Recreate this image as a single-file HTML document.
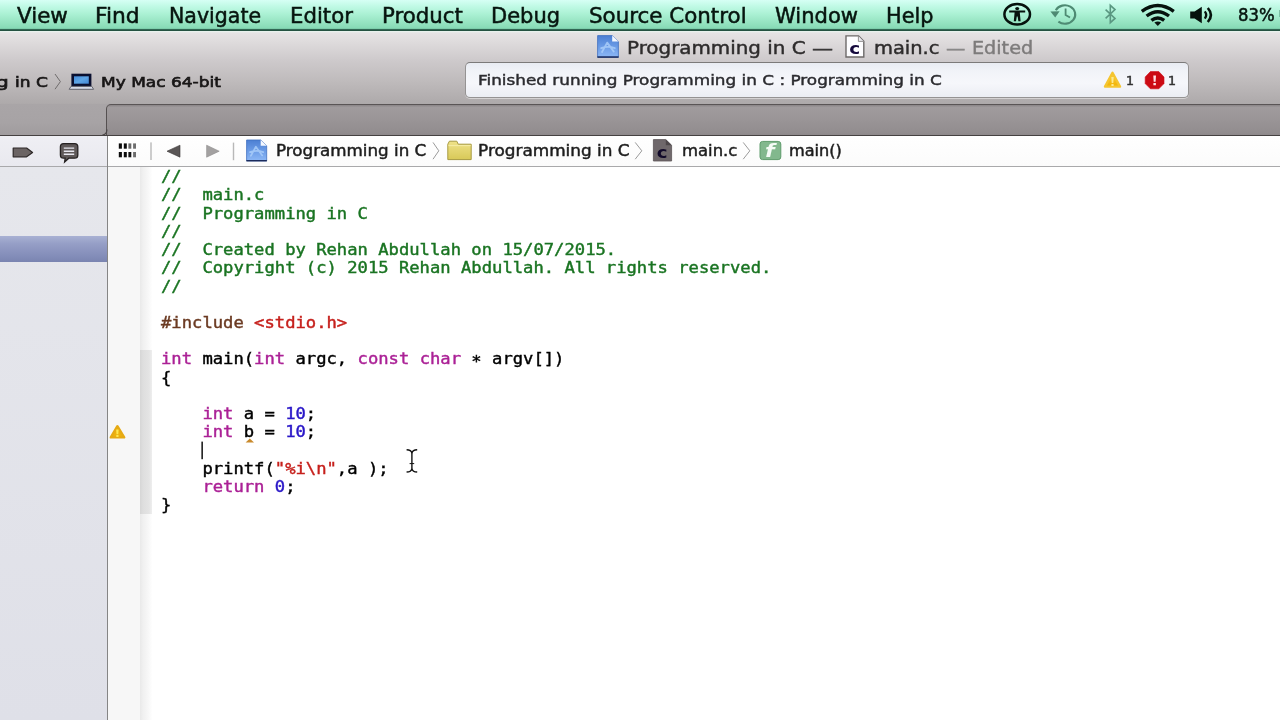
<!DOCTYPE html>
<html lang="en">
<head>
<meta charset="utf-8">
<title>Programming in C — main.c — Edited</title>
<style>
html,body{margin:0;padding:0;}
body{width:1280px;height:720px;overflow:hidden;position:relative;background:#fff;font-family:"DejaVu Sans","Liberation Sans",sans-serif;}
.abs{position:absolute;}
.t{position:absolute;white-space:pre;transform-origin:0 50%;font-family:"DejaVu Sans","Liberation Sans",sans-serif;}
#menubar{left:0;top:0;width:1280px;height:31px;background:linear-gradient(#d6fff5 0px,#c1fae6 6px,#abf1d4 14px,#97e4c2 22px,#86dab5 28.4px,#3f7a64 29.2px,#1c4838 30px,#2c5c4a 31px);}
#menuline{left:0;top:29px;width:1280px;height:2px;background:linear-gradient(#3f7f68,#2c5a49);}
#toolbar{left:0;top:31px;width:1280px;height:73px;background:linear-gradient(#e9f6f0 0px,#e5e3e4 2px,#dfdcdd 10px,#cdc9cb 30px,#bfbbbc 50px,#b4b0b1 64px,#ada9aa 73px);}
#tabstrip{left:0;top:104px;width:1280px;height:31px;background:linear-gradient(#a9a5a7,#a7a3a5 60%,#a09c9e);}
#tab{left:106.4px;top:103.8px;width:1180px;height:32px;background:linear-gradient(#8a8587 0px,#a09b9d 2.5px,#9a9597 14px,#928d8f 27px,#8c8789 31px);border-top-left-radius:5px;border-top:1.2px solid #5a5556;border-left:1.2px solid #555051;}
#darkline{left:0;top:134.6px;width:1280px;height:1.4px;background:#454141;}
#navsel{left:0;top:136px;width:107px;height:30px;background:linear-gradient(#efeff4,#e9e9ef);}
#jump{left:108px;top:136px;width:1172px;height:30px;background:linear-gradient(#ffffff,#fbfbfb);}
#jumpline{left:0;top:166px;width:1280px;height:1px;background:#a9a9ab;}
#nav{left:0;top:167px;width:107px;height:553px;background:linear-gradient(#e6e7ec,#dfe0e8);}
#navrow{left:0;top:236px;width:107px;height:26px;background:linear-gradient(#a9b1d3 0px,#959ec6 8px,#838db9 20px,#7a84b0 26px);}
#divider{left:106.8px;top:136px;width:1.5px;height:584px;background:#858585;}
#gutter{left:108.4px;top:167px;width:32px;height:553px;background:#f7f7f7;}
#ribbon{left:140px;top:167px;width:12px;height:553px;background:linear-gradient(90deg,#e9e9e9 0,#f0f0f0 3px,#f7f7f7 8px,#fefefe 12px);}
#ribbonfn{left:140px;top:350px;width:12px;height:164px;background:linear-gradient(90deg,#d6d6d6 0,#dedede 3px,#e4e4e4 9px,#eeeeee 12px);}
#activity{left:465px;top:62.3px;width:722px;height:33.4px;border:1px solid #959393;border-top-color:#7c7a7a;border-radius:5px;background:linear-gradient(#e9ecf3 0px,#f1f3f8 8px,#f6f7fb 20px,#eceef4 33px);box-shadow:0 1px 0 rgba(255,255,255,.45);}
#code{left:161.2px;top:168.2px;-webkit-text-stroke:0.4px;margin:0;font-family:"DejaVu Sans Mono","Liberation Mono",monospace;font-size:15px;line-height:18.22px;color:#000;transform-origin:0 0;transform:scaleX(1.1455);white-space:pre;}
.c{color:#1a7422}.p{color:#6b3a22}.s{color:#c6201c}.k{color:#ab2196}.n{color:#2a17c8}
svg{position:absolute;overflow:visible}
.t,#code,#icons{filter:blur(0.4px);}
</style>
</head>
<body>
<div class="abs" id="menubar"></div>
<div class="abs" id="toolbar"></div>
<div class="abs" id="tabstrip"></div>
<div class="abs" id="tab"></div>
<div class="abs" id="darkline"></div>
<div class="abs" id="navsel"></div>
<div class="abs" id="jump"></div>
<div class="abs" id="nav"></div>
<div class="abs" id="navrow"></div>
<div class="abs" id="gutter"></div>
<div class="abs" id="ribbon"></div>
<div class="abs" id="ribbonfn"></div>
<div class="abs" id="jumpline"></div>
<div class="abs" id="divider"></div>
<div class="abs" id="activity"></div>
<svg id="icons" width="1280" height="720" viewBox="0 0 1280 720" style="left:0;top:0">
<defs>
<linearGradient id="gproj" x1="0" y1="0" x2="0" y2="1"><stop offset="0" stop-color="#4c7fd3"/><stop offset="0.5" stop-color="#6a9be6"/><stop offset="1" stop-color="#8db8f6"/></linearGradient>
<linearGradient id="gfold" x1="0" y1="0" x2="0" y2="1"><stop offset="0" stop-color="#efe289"/><stop offset="1" stop-color="#d8c958"/></linearGradient>
<linearGradient id="gwarn" x1="0" y1="0" x2="0" y2="1"><stop offset="0" stop-color="#f8cf45"/><stop offset="1" stop-color="#f2b200"/></linearGradient>
<linearGradient id="gscr" x1="0" y1="0" x2="1" y2="1"><stop offset="0" stop-color="#3f86d6"/><stop offset="0.5" stop-color="#5fa6e6"/><stop offset="1" stop-color="#3b7fd0"/></linearGradient>
<g id="proj">
 <path d="M0.6 0.6 H15.2 L21.4 6.6 V22.2 H0.6 Z" fill="url(#gproj)" stroke="#3f6fbf" stroke-width="0.8"/>
 <path d="M0.4 21.3 H21.6 V22.8 H0.4 Z" fill="#1b2b5c"/>
 <path d="M15.2 0.6 L21.4 6.6 H15.2 Z" fill="#f4f8ff"/>
 <path d="M5 17 L10.2 7.6 L16.8 16.6 M4.2 13.2 Q11 10.4 17.8 13.2" fill="none" stroke="#add0fa" stroke-opacity="0.8" stroke-width="1.8" stroke-linecap="round" stroke-linejoin="round"/>
</g>
</defs>

<!-- menu extras -->
<g id="acc">
 <ellipse cx="1017.2" cy="14.2" rx="12.8" ry="10.3" fill="none" stroke="#06120d" stroke-width="2.5"/>
 <ellipse cx="1017.2" cy="8.6" rx="2" ry="1.7" fill="#06120d"/>
 <path d="M1009.2 10.6 H1025.2 V12.4 H1019.8 L1020.6 21.2 H1018.4 L1017.6 16.4 H1016.8 L1016 21.2 H1013.8 L1014.6 12.4 H1009.2 Z" fill="#06120d"/>
</g>
<g id="tm" fill="none" stroke="#4e8a73" stroke-width="2.1">
 <path d="M1055.8 10.2 A10.3 9.2 0 1 1 1058.4 21.6"/>
 <path d="M1065.6 8.4 V15 L1070 17.6" stroke-width="1.8"/>
 <path d="M1050.4 11.6 L1059.6 11.2 L1055.2 17.6 Z" fill="#4e8a73" stroke="none"/>
</g>
<path id="bt" d="M1105.6 9.6 L1115 18.4 L1110.3 22.6 V5.4 L1115 9.6 L1105.6 18.4" fill="none" stroke="#5a9781" stroke-width="1.6"/>
<g id="wifi" fill="none" stroke="#06120d" stroke-width="3.4" >
 <path d="M1141.8 11.4 Q1157.8 -0.4 1173.8 11.4"/>
 <path d="M1146.6 16 Q1157.8 7.4 1169 16"/>
 <path d="M1151.4 20.4 Q1157.8 15.4 1164.2 20.4"/>
 <path d="M1154.4 22.6 Q1157.8 20.4 1161.2 22.6 L1157.8 26 Z" fill="#06120d" stroke="none"/>
</g>
<g id="vol">
 <path d="M1190.2 11.4 H1194.6 L1201.8 6.8 V23.2 L1194.6 18.6 H1190.2 Z" fill="#06120d"/>
 <path d="M1204.8 11.4 Q1207.6 15 1204.8 18.6" fill="none" stroke="#06120d" stroke-width="2.3"/>
 <path d="M1207.8 8 Q1214 15 1207.8 22" fill="none" stroke="#06120d" stroke-width="2.6"/>
</g>
<rect x="1279.2" y="10" width="1" height="7" fill="#6fb398"/>

<path d="M107 129.5 Q106.8 134.4 102.4 135" fill="none" stroke="#4a4545" stroke-width="1.1"/>
<!-- title icons -->
<use href="#proj" x="597" y="35"/>
<g id="cfile">
 <path d="M846 35.9 H858.6 L863.8 41.2 V57 H846 Z" fill="#fdfdff" stroke="#6d6a6a" stroke-width="1.4"/>
 <path d="M858.4 36 V41.4 H863.8" fill="#e9e9ee" stroke="#8a8787" stroke-width="0.9"/>
 <text x="849.2" y="53.7" font-family="DejaVu Sans, Liberation Sans, sans-serif" font-weight="bold" font-size="15.5" fill="#14083c" textLength="11" lengthAdjust="spacingAndGlyphs">c</text>
</g>

<!-- toolbar scheme -->
<path d="M55 74 L60.4 81.6 L55 89.2" fill="none" stroke="#6f6c6c" stroke-width="1"/>
<g id="laptop">
 <rect x="72.7" y="75" width="17.4" height="10" fill="url(#gscr)" stroke="#0a1030" stroke-width="2.6"/>
 <path d="M71 86.4 H91.8 L93.6 89.3 H69.2 Z" fill="#d6dbe8" stroke="#5a5a62" stroke-width="0.9"/>
</g>

<!-- activity icons -->
<g id="warn">
 <path d="M1112.5 72.8 L1120 86.6 H1105 Z" fill="url(#gwarn)" stroke="#f5c530" stroke-width="2.4" stroke-linejoin="round"/>
 <path d="M1111.3 77 H1113.7 L1113.3 83 H1111.7 Z M1111.4 84 H1113.6 V86 H1111.4 Z" fill="#fcea90"/>
</g>
<g id="err">
 <path d="M1150.4 71.6 H1158.8 L1164 77 V83.6 L1158.8 88.8 H1150.4 L1145.2 83.6 V77 Z" fill="#cc0a14" stroke="#cc0a14" stroke-width="0.6" stroke-linejoin="round"/>
 <path d="M1153.3 75.4 H1156 L1155.6 81.8 H1153.7 Z M1153.4 83 H1155.9 V85.2 H1153.4 Z" fill="#ffe1e4"/>
</g>

<!-- navigator selector icons -->
<path d="M13.2 148 H26.6 L32.6 152.4 L26.6 156.8 H13.2 Z" fill="#6b6464" stroke="#2e2929" stroke-width="1.2" stroke-linejoin="round"/>
<g id="bubble">
 <path d="M63.6 143.6 H74.6 Q77.8 143.6 77.8 146.8 V155 Q77.8 158.2 74.6 158.2 H68.8 L64.6 162 L65.2 158.2 H63.6 Q60.4 158.2 60.4 155 V146.8 Q60.4 143.6 63.6 143.6 Z" fill="#5f5959" stroke="#262222" stroke-width="1.3"/>
 <path d="M63.8 148.1 H74.2 M63.8 151.2 H74.2 M63.8 154.3 H74.2" stroke="#e8e8f0" stroke-width="1.4"/>
</g>

<!-- jump bar -->
<g id="grid">
 <rect x="118.8" y="143.4" width="3.1" height="5.3" fill="#0c0c0c"/><rect x="123.8" y="143.4" width="3" height="5.3" fill="#0c0c0c"/><rect x="128.4" y="143.4" width="2.9" height="5.3" fill="#666"/><rect x="133.1" y="143.4" width="2.9" height="5.3" fill="#6e6e6e"/>
 <rect x="118.8" y="152" width="3.1" height="5.3" fill="#0c0c0c"/><rect x="123.8" y="152" width="3" height="5.3" fill="#0c0c0c"/><rect x="128.4" y="152" width="2.9" height="5.3" fill="#111"/><rect x="133.1" y="152" width="2.9" height="5.3" fill="#6e6e6e"/>
</g>
<rect x="150.3" y="142.4" width="1.4" height="17.6" fill="#b8b8b8"/>
<path d="M180 145.2 V157.2 L167 151.2 Z" fill="#5a5656" stroke="#3a3737" stroke-width="0.6"/>
<path d="M206.6 145.2 V157.2 L219.2 151.2 Z" fill="#a3a1a1" stroke="#8d8b8b" stroke-width="0.6"/>
<rect x="232.8" y="142.6" width="1.4" height="17.6" fill="#b8b8b8"/>
<use href="#proj" transform="translate(246 139.4) scale(0.966 0.966)"/>
<path d="M433 142.4 L438.8 150.8 L433 159.2" fill="none" stroke="#9a9a9a" stroke-width="1"/>
<g id="folder">
 <path d="M447.8 144.2 L449.4 141.2 H456.8 L458.2 144.2 H471.2 V159.6 H447.8 Z" fill="url(#gfold)" stroke="#a79a40" stroke-width="1"/>
 <path d="M448.4 145.6 H470.6" stroke="#f6eda6" stroke-width="1"/>
</g>
<path d="M635.2 142.4 L641.8 150.8 L635.2 159.2" fill="none" stroke="#9a9a9a" stroke-width="1"/>
<g id="cfile2">
 <path d="M653.4 139.6 H665.8 L671.6 145.2 V161 H653.4 Z" fill="#6f686b" stroke="#5a5457" stroke-width="0.8"/>
 <path d="M665.8 139.6 V145.2 H671.6 Z" fill="#4d474a"/>
 <text x="656.8" y="157.6" font-family="DejaVu Sans, Liberation Sans, sans-serif" font-weight="bold" font-size="15" fill="#120a2a" textLength="10.8" lengthAdjust="spacingAndGlyphs">c</text>
</g>
<path d="M743.2 142.4 L749.8 150.8 L743.2 159.2" fill="none" stroke="#9a9a9a" stroke-width="1"/>
<g id="ficon">
 <rect x="760" y="141.4" width="20.8" height="18.2" rx="2.6" fill="#82b88d" stroke="#5f9c6c" stroke-width="1"/>
 <text x="765" y="157" font-family="DejaVu Sans, Liberation Sans, sans-serif" font-style="italic" font-weight="bold" font-size="18" fill="#f4fbf5" textLength="9.6" lengthAdjust="spacingAndGlyphs">f</text>
</g>

<!-- gutter warning -->
<g id="gwarn2">
 <path d="M117.4 426.2 L124.2 437.4 H110.8 Z" fill="#eeb20e" stroke="#e6aa14" stroke-width="2.4" stroke-linejoin="round"/>
 <path d="M116.2 429.6 H118.6 L118.3 434.2 H116.5 Z M116.3 435 H118.5 V437 H116.3 Z" fill="#ffe750"/>
</g>
<!-- fix-it caret under b -->
<path d="M249.8 438.6 L254 442.4 H245.6 Z" fill="#c98a2c"/>
<!-- text caret -->
<rect x="201.4" y="441.6" width="1.5" height="17.6" fill="#111"/>
<!-- I-beam cursor -->
<g id="ibeam" fill="none" stroke="#111" stroke-width="1.4">
 <path d="M406.6 449.8 Q411.2 450 411.9 453 Q412.6 450 417.2 449.8"/>
 <path d="M406.6 472 Q411.2 471.8 411.9 468.8 Q412.6 471.8 417.2 472"/>
 <path d="M411.9 452.6 V469.2"/>
 <path d="M409.6 463.6 H414.2" stroke-width="1"/>
</g>
</svg>

<span class="t" id="m1" style="left:16.7px;top:3.5px;font-size:20.9px;line-height:25.08px;color:#07150f;transform:scaleX(1.0267);-webkit-text-stroke:0.5px #07150f;">View</span>
<span class="t" id="m2" style="left:95.2px;top:3.5px;font-size:20.9px;line-height:25.08px;color:#07150f;transform:scaleX(1.0418);-webkit-text-stroke:0.5px #07150f;">Find</span>
<span class="t" id="m3" style="left:168.7px;top:3.5px;font-size:20.9px;line-height:25.08px;color:#07150f;transform:scaleX(0.9829);-webkit-text-stroke:0.5px #07150f;">Navigate</span>
<span class="t" id="m4" style="left:289.7px;top:3.5px;font-size:20.9px;line-height:25.08px;color:#07150f;transform:scaleX(1.0173);-webkit-text-stroke:0.5px #07150f;">Editor</span>
<span class="t" id="m5" style="left:381.7px;top:3.5px;font-size:20.9px;line-height:25.08px;color:#07150f;transform:scaleX(1.0198);-webkit-text-stroke:0.5px #07150f;">Product</span>
<span class="t" id="m6" style="left:491.2px;top:3.5px;font-size:20.9px;line-height:25.08px;color:#07150f;transform:scaleX(1.0058);-webkit-text-stroke:0.5px #07150f;">Debug</span>
<span class="t" id="m7" style="left:588.7px;top:3.5px;font-size:20.9px;line-height:25.08px;color:#07150f;transform:scaleX(1.0240);-webkit-text-stroke:0.5px #07150f;">Source Control</span>
<span class="t" id="m8" style="left:774.7px;top:3.5px;font-size:20.9px;line-height:25.08px;color:#07150f;transform:scaleX(1.0088);-webkit-text-stroke:0.5px #07150f;">Window</span>
<span class="t" id="m9" style="left:886.2px;top:3.5px;font-size:20.9px;line-height:25.08px;color:#07150f;transform:scaleX(0.9949);-webkit-text-stroke:0.5px #07150f;">Help</span>
<span class="t" id="m10" style="left:1237.7px;top:5.0px;font-size:17.0px;line-height:20.4px;color:#07150f;transform:scaleX(0.9683);-webkit-text-stroke:0.5px #07150f;">83%</span>
<span class="t" id="t1" style="left:626.7px;top:37.2px;font-size:18.1px;line-height:21.72px;color:#2e2c2c;transform:scaleX(1.0984);-webkit-text-stroke:0.45px #2e2c2c;">Programming in C</span>
<span class="t" id="t2" style="left:811.7px;top:37.2px;font-size:18.1px;line-height:21.72px;color:#3a3838;transform:scaleX(1.1661);-webkit-text-stroke:0.45px #3a3838;">—</span>
<span class="t" id="t3" style="left:873.8px;top:37.0px;font-size:18.1px;line-height:21.72px;color:#2e2c2c;transform:scaleX(1.0751);-webkit-text-stroke:0.45px #2e2c2c;">main.c</span>
<span class="t" id="t4" style="left:946.2px;top:37.0px;font-size:18.1px;line-height:21.72px;color:#8a8888;transform:scaleX(1.0722);-webkit-text-stroke:0.45px #8a8888;">—</span>
<span class="t" id="t5" style="left:972.0px;top:37.0px;font-size:18.1px;line-height:21.72px;color:#7d7b7b;transform:scaleX(1.0597);-webkit-text-stroke:0.45px #7d7b7b;">Edited</span>
<span class="t" id="a1" style="left:478.0px;top:71.4px;font-size:14.7px;line-height:17.64px;color:#2c2c30;transform:scaleX(1.1468);-webkit-text-stroke:0.45px #2c2c30;">Finished running Programming in C : Programming in C</span>
<span class="t" id="a2" style="left:1125.6px;top:72.8px;font-size:12.7px;line-height:15.24px;color:#333;transform:scaleX(0.9903);-webkit-text-stroke:0.5px #333;">1</span>
<span class="t" id="a3" style="left:1168.0px;top:72.8px;font-size:12.7px;line-height:15.24px;color:#333;transform:scaleX(0.9903);-webkit-text-stroke:0.5px #333;">1</span>
<span class="t" id="s0" style="left:-4.3px;top:74.1px;font-size:14.4px;line-height:17.28px;color:#181616;transform:scaleX(1.3894);-webkit-text-stroke:0.65px #181616;">g</span>
<span class="t" id="s1" style="left:15.4px;top:74.1px;font-size:14.4px;line-height:17.28px;color:#181616;transform:scaleX(1.1856);-webkit-text-stroke:0.65px #181616;">in C</span>
<span class="t" id="s2" style="left:100.5px;top:74.1px;font-size:14.4px;line-height:17.28px;color:#181616;transform:scaleX(1.1811);-webkit-text-stroke:0.65px #181616;">My Mac 64-bit</span>
<span class="t" id="j1" style="left:275.5px;top:142.4px;font-size:15.0px;line-height:18.0px;color:#1d1d1d;transform:scaleX(1.1151);-webkit-text-stroke:0.45px #1d1d1d;">Programming in C</span>
<span class="t" id="j2" style="left:478.0px;top:142.4px;font-size:15.0px;line-height:18.0px;color:#1d1d1d;transform:scaleX(1.1248);-webkit-text-stroke:0.45px #1d1d1d;">Programming in C</span>
<span class="t" id="j3" style="left:681.7px;top:142.4px;font-size:15.0px;line-height:18.0px;color:#1d1d1d;transform:scaleX(1.0970);-webkit-text-stroke:0.45px #1d1d1d;">main.c</span>
<span class="t" id="j4" style="left:789.2px;top:142.4px;font-size:15.0px;line-height:18.0px;color:#1d1d1d;transform:scaleX(1.0755);-webkit-text-stroke:0.45px #1d1d1d;">main()</span>
<pre class="abs" id="code"><span class="c">//</span>
<span class="c">//  main.c</span>
<span class="c">//  Programming in C</span>
<span class="c">//</span>
<span class="c">//  Created by Rehan Abdullah on 15/07/2015.</span>
<span class="c">//  Copyright (c) 2015 Rehan Abdullah. All rights reserved.</span>
<span class="c">//</span>

<span class="p">#include </span><span class="s">&lt;stdio.h&gt;</span>

<span class="k">int</span> main(<span class="k">int</span> argc, <span class="k">const</span> <span class="k">char</span> <span style="position:relative;top:2.8px">*</span> argv[])
{

    <span class="k">int</span> a = <span class="n">10</span>;
    <span class="k">int</span> b = <span class="n">10</span>;

    printf(<span class="s">"%i\n"</span>,a );
    <span class="k">return</span> <span class="n">0</span>;
}</pre>
</body>
</html>
